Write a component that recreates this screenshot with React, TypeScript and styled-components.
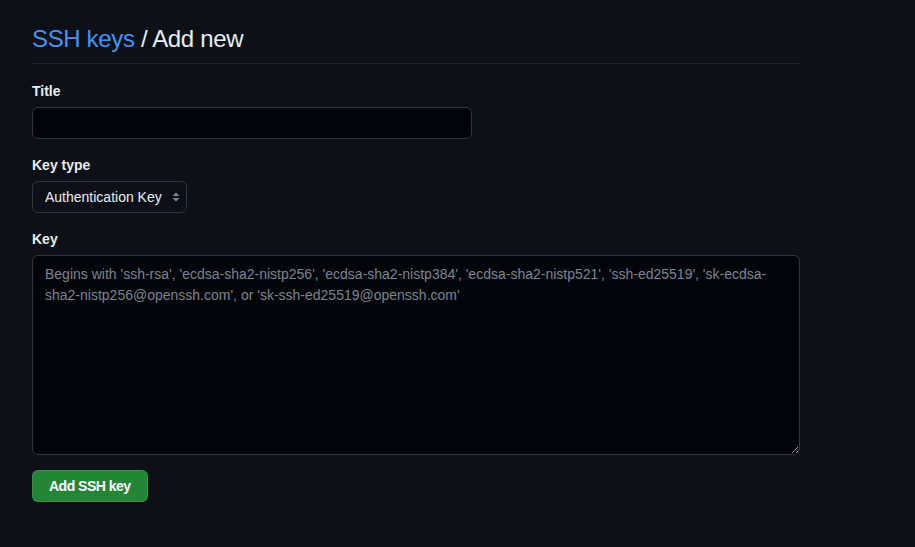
import React from "react";
import styled, { createGlobalStyle } from "styled-components";

const GlobalStyle = createGlobalStyle`
  html, body {
    margin: 0;
    padding: 0;
    background: #0d1117;
    color: #e6edf3;
    font-family: "Liberation Sans", Arial, sans-serif;
  }
  * { box-sizing: border-box; }
`;

const Page = styled.div`
  width: 915px;
  min-height: 547px;
  background: #0d1117;
  padding: 21px 0 0 32px;
`;

const Content = styled.div`
  width: 768px;
`;

const Subhead = styled.div`
  padding-bottom: 6px;
  border-bottom: 1px solid #21262d;
  margin-bottom: 17px;
`;

const Heading = styled.h2`
  margin: 0;
  font-size: 24px;
  line-height: 36px;
  font-weight: 400;
  letter-spacing: -0.35px;
  color: #e6edf3;
`;

const Crumb = styled.a`
  color: #4493f8;
  text-decoration: none;
`;

const Form = styled.form`
  display: flex;
  flex-direction: column;
  gap: 16px;
`;

const Group = styled.div`
  display: flex;
  flex-direction: column;
  align-items: flex-start;
`;

const Label = styled.label`
  font-size: 14px;
  line-height: 21px;
  font-weight: 700;
  color: #e6edf3;
  margin-bottom: 5px;
`;

const fieldBase = `
  background: #010409;
  border: 1px solid #30363d;
  border-radius: 6px;
  color: #e6edf3;
  font-family: "Liberation Sans", Arial, sans-serif;
  font-size: 14px;
  outline: none;
`;

const TextInput = styled.input`
  ${fieldBase}
  width: 440px;
  height: 32px;
  padding: 5px 12px;
`;

const SelectWrap = styled.div`
  position: relative;
  display: inline-flex;
`;

const Select = styled.select`
  ${fieldBase}
  background: #0d1117;
  appearance: none;
  -webkit-appearance: none;
  height: 32px;
  width: 155px;
  padding: 0 24px 0 12px;
`;

const SelectArrow = styled.svg`
  position: absolute;
  right: 7px;
  top: 11px;
  pointer-events: none;
`;

const TextArea = styled.textarea`
  ${fieldBase}
  width: 768px;
  height: 200px;
  padding: 8px 12px;
  line-height: 21px;
  resize: vertical;
  &::placeholder {
    color: #7d8590;
  }
`;

const SubmitButton = styled.button`
  align-self: flex-start;
  height: 32px;
  padding: 0 16px;
  background: #238636;
  border: 1px solid rgba(240, 246, 252, 0.1);
  border-radius: 6px;
  color: #ffffff;
  font-family: "Liberation Sans", Arial, sans-serif;
  font-size: 14px;
  font-weight: 700;
  letter-spacing: -0.5px;
  cursor: pointer;
  margin-top: -1px;
`;

export default function App() {
  return (
    <Page>
      <GlobalStyle />
      <Content>
        <Subhead>
          <Heading>
            <Crumb href="#">SSH keys</Crumb> / Add new
          </Heading>
        </Subhead>
        <Form onSubmit={(e) => e.preventDefault()}>
          <Group>
            <Label htmlFor="title">Title</Label>
            <TextInput id="title" type="text" />
          </Group>
          <Group>
            <Label htmlFor="keytype">Key type</Label>
            <SelectWrap>
              <Select id="keytype" defaultValue="auth">
                <option value="auth">Authentication Key</option>
                <option value="sign">Signing Key</option>
              </Select>
              <SelectArrow width="8" height="10" viewBox="0 0 8 10" fill="#7d8590">
                <path d="M0.5 4 L4 0.5 L7.5 4 Z" />
                <path d="M0.5 6 L4 9.5 L7.5 6 Z" />
              </SelectArrow>
            </SelectWrap>
          </Group>
          <Group>
            <Label htmlFor="key">Key</Label>
            <TextArea
              id="key"
              placeholder="Begins with 'ssh-rsa', 'ecdsa-sha2-nistp256', 'ecdsa-sha2-nistp384', 'ecdsa-sha2-nistp521', 'ssh-ed25519', 'sk-ecdsa-sha2-nistp256@openssh.com', or 'sk-ssh-ed25519@openssh.com'"
            />
          </Group>
          <SubmitButton type="submit">Add SSH key</SubmitButton>
        </Form>
      </Content>
    </Page>
  );
}
